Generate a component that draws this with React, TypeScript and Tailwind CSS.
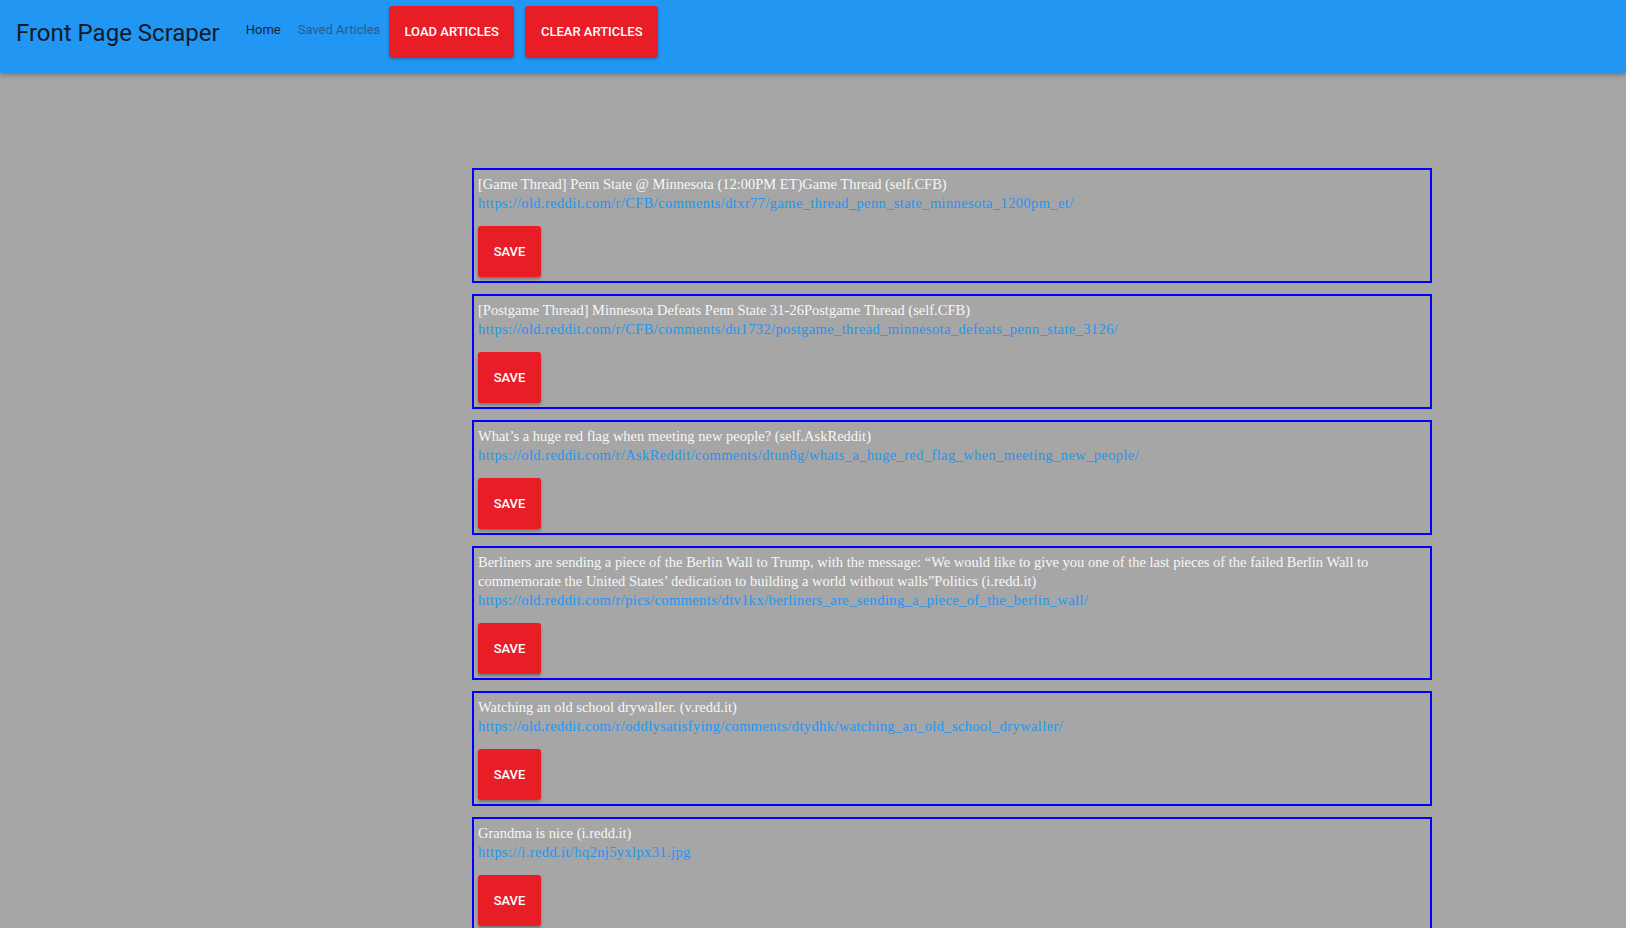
const articles = [
  {
    title: "[Game Thread] Penn State @ Minnesota (12:00PM ET)Game Thread (self.CFB)",
    link: "https://old.reddit.com/r/CFB/comments/dtxr77/game_thread_penn_state_minnesota_1200pm_et/",
  },
  {
    title: "[Postgame Thread] Minnesota Defeats Penn State 31-26Postgame Thread (self.CFB)",
    link: "https://old.reddit.com/r/CFB/comments/du1732/postgame_thread_minnesota_defeats_penn_state_3126/",
  },
  {
    title: "What\u2019s a huge red flag when meeting new people? (self.AskReddit)",
    link: "https://old.reddit.com/r/AskReddit/comments/dtun8g/whats_a_huge_red_flag_when_meeting_new_people/",
  },
  {
    title:
      "Berliners are sending a piece of the Berlin Wall to Trump, with the message: \u201cWe would like to give you one of the last pieces of the failed Berlin Wall to commemorate the United States\u2019 dedication to building a world without walls\u201dPolitics (i.redd.it)",
    link: "https://old.reddit.com/r/pics/comments/dtv1kx/berliners_are_sending_a_piece_of_the_berlin_wall/",
  },
  {
    title: "Watching an old school drywaller. (v.redd.it)",
    link: "https://old.reddit.com/r/oddlysatisfying/comments/dtydhk/watching_an_old_school_drywaller/",
  },
  {
    title: "Grandma is nice (i.redd.it)",
    link: "https://i.redd.it/hq2nj5yxlpx31.jpg",
  },
];

function RedButton({ label, className }: { label: string; className: string }) {
  return (
    <button
      className={
        "flex items-center justify-center rounded-[3px] bg-[#e81d26] text-[13px] font-medium uppercase text-white shadow-[0_2px_3px_rgba(0,0,0,0.3)] " +
        className
      }
    >
      {label}
    </button>
  );
}

export default function App() {
  return (
    <div className="min-h-[928px] bg-[#a6a6a6] pb-10 font-['Roboto',sans-serif]">
      <header className="relative z-10 h-[73px] bg-[#2196f3] shadow-[0_2px_5px_rgba(0,0,0,0.3)]">
        <div className="flex h-[63px] items-center pl-[16px]">
          <span className="pt-[2px] text-[24px] leading-none text-[#101b26]">Front Page Scraper</span>
          <a className="-mt-[4px] ml-[26px] text-[13px] text-[#15263a]">Home</a>
          <a className="-mt-[4px] ml-[17px] text-[13px] text-[#2a5b89]">Saved Articles</a>
          <RedButton label="Load Articles" className="ml-[9px] h-[51px] w-[125px]" />
          <RedButton label="Clear Articles" className="ml-[11px] h-[51px] w-[133px]" />
        </div>
      </header>

      <main className="ml-[472px] mt-[95px] flex w-[960px] flex-col gap-[11px]">
        {articles.map((a) => (
          <div key={a.link} className="border-2 border-[#0000ff] p-[4px]">
            <p className="pt-[1px] font-['Liberation_Serif',serif] text-[14.5px] leading-[19px] text-[#f7f7f7]">
              {a.title}
            </p>
            <a className="block font-['Liberation_Serif',serif] text-[14.5px] leading-[19px] tracking-[0.38px] text-[#2196f3]">
              {a.link}
            </a>
            <RedButton label="Save" className="mt-[13px] h-[51px] w-[63px]" />
          </div>
        ))}
      </main>
    </div>
  );
}
